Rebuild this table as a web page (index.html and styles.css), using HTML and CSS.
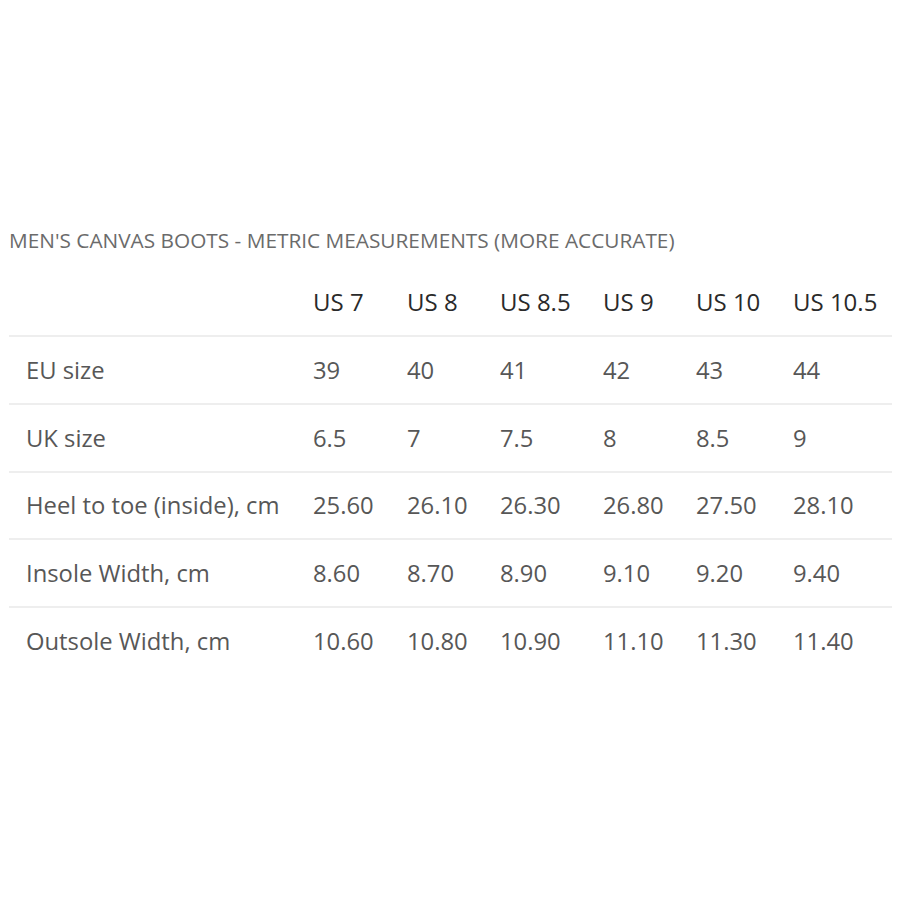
FILE: index.html
```html
<!DOCTYPE html>
<html>
<head>
<meta charset="utf-8">
<link rel="stylesheet" href="styles.css">
</head>
<body>
<div class="wrap">
  <h2 class="title">MEN'S CANVAS BOOTS - METRIC MEASUREMENTS (MORE ACCURATE)</h2>
  <table class="sizes">
    <thead>
      <tr><th></th><th>US 7</th><th>US 8</th><th>US 8.5</th><th>US 9</th><th>US 10</th><th>US 10.5</th></tr>
    </thead>
    <tbody>
      <tr><td>EU size</td><td>39</td><td>40</td><td>41</td><td>42</td><td>43</td><td>44</td></tr>
      <tr><td>UK size</td><td>6.5</td><td>7</td><td>7.5</td><td>8</td><td>8.5</td><td>9</td></tr>
      <tr><td>Heel to toe (inside), cm</td><td>25.60</td><td>26.10</td><td>26.30</td><td>26.80</td><td>27.50</td><td>28.10</td></tr>
      <tr><td>Insole Width, cm</td><td>8.60</td><td>8.70</td><td>8.90</td><td>9.10</td><td>9.20</td><td>9.40</td></tr>
      <tr><td>Outsole Width, cm</td><td>10.60</td><td>10.80</td><td>10.90</td><td>11.10</td><td>11.30</td><td>11.40</td></tr>
    </tbody>
  </table>
</div>
</body>
</html>
```
FILE: styles.css
```css
html, body {
  margin: 0;
  padding: 0;
  background: #ffffff;
}
body {
  font-family: "Open Sans", "Liberation Sans", sans-serif;
}
.wrap {
  padding: 226px 8px 0 9px;
}
.title {
  margin: 0 0 14px 0;
  font-size: 20.8px;
  font-weight: 400;
  color: #6b6b6b;
  line-height: 28px;
}
.sizes {
  width: 883px;
  border-collapse: collapse;
  table-layout: fixed;
}
.sizes th, .sizes td {
  text-align: left;
  font-weight: 400;
  padding: 0 0 0 17px;
  white-space: nowrap;
}
.sizes th {
  height: 67px;
  font-size: 24px;
  color: #2a2a2a;
  border-bottom: 2px solid #eeeeee;
}
.sizes td {
  height: 65.8px;
  font-size: 23.8px;
  color: #575757;
  border-bottom: 2px solid #eeeeee;
}
.sizes tbody tr:last-child td {
  border-bottom: none;
}
.sizes th:nth-child(1) { width: 270px; }
.sizes th:nth-child(2) { width: 77px; }
.sizes th:nth-child(3) { width: 76px; }
.sizes th:nth-child(4) { width: 86px; }
.sizes th:nth-child(5) { width: 76px; }
.sizes th:nth-child(6) { width: 80px; }
.sizes th:nth-child(7) { width: 99px; }
```
